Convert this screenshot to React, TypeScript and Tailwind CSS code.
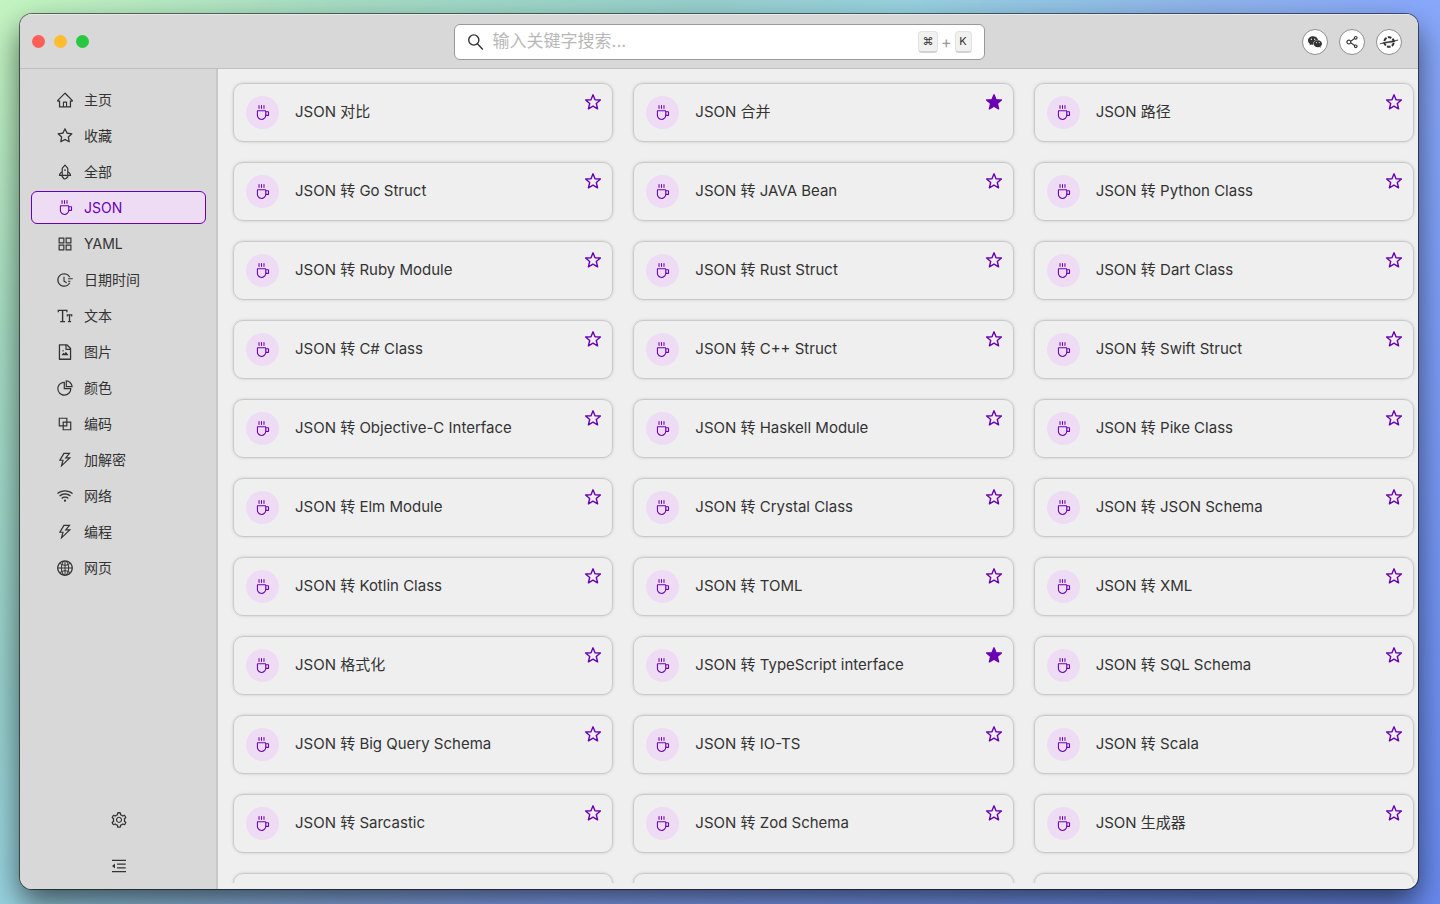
import type { IconType } from "react-icons";
import {
  AiFillWechat,
  AiOutlineAppstore,
  AiOutlineBlock,
  AiOutlineCoffee,
  AiOutlineFieldTime,
  AiOutlineFileImage,
  AiOutlineFontSize,
  AiOutlineGlobal,
  AiOutlineHome,
  AiOutlineMenuFold,
  AiOutlinePieChart,
  AiOutlineRocket,
  AiOutlineSetting,
  AiOutlineShareAlt,
  AiOutlineStar,
  AiOutlineThunderbolt,
  AiOutlineWifi,
} from "react-icons/ai";

type MenuItem = { label: string; icon: IconType };

const menu: MenuItem[] = [
  { label: "主页", icon: AiOutlineHome },
  { label: "收藏", icon: AiOutlineStar },
  { label: "全部", icon: AiOutlineRocket },
  { label: "JSON", icon: AiOutlineCoffee },
  { label: "YAML", icon: AiOutlineAppstore },
  { label: "日期时间", icon: AiOutlineFieldTime },
  { label: "文本", icon: AiOutlineFontSize },
  { label: "图片", icon: AiOutlineFileImage },
  { label: "颜色", icon: AiOutlinePieChart },
  { label: "编码", icon: AiOutlineBlock },
  { label: "加解密", icon: AiOutlineThunderbolt },
  { label: "网络", icon: AiOutlineWifi },
  { label: "编程", icon: AiOutlineThunderbolt },
  { label: "网页", icon: AiOutlineGlobal },
];

const tools = [
  "JSON 对比",
  "JSON 合并",
  "JSON 路径",
  "JSON 转 Go Struct",
  "JSON 转 JAVA Bean",
  "JSON 转 Python Class",
  "JSON 转 Ruby Module",
  "JSON 转 Rust Struct",
  "JSON 转 Dart Class",
  "JSON 转 C# Class",
  "JSON 转 C++ Struct",
  "JSON 转 Swift Struct",
  "JSON 转 Objective-C Interface",
  "JSON 转 Haskell Module",
  "JSON 转 Pike Class",
  "JSON 转 Elm Module",
  "JSON 转 Crystal Class",
  "JSON 转 JSON Schema",
  "JSON 转 Kotlin Class",
  "JSON 转 TOML",
  "JSON 转 XML",
  "JSON 格式化",
  "JSON 转 TypeScript interface",
  "JSON 转 SQL Schema",
  "JSON 转 Big Query Schema",
  "JSON 转 IO-TS",
  "JSON 转 Scala",
  "JSON 转 Sarcastic",
  "JSON 转 Zod Schema",
  "JSON 生成器",
  "",
  "",
  "",
];

const favorites = ["JSON 合并", "JSON 转 TypeScript interface"];

const SearchIcon = () => (
  <svg viewBox="0 0 18 18" className="size-[18px]" fill="none" stroke="currentColor" strokeWidth="1.4">
    <circle cx="6.8" cy="7" r="5.1" />
    <path d="M10.4 10.8 15.8 16.4" />
  </svg>
);

const OrbitIcon = () => (
  <svg viewBox="0 0 20 20" className="size-5" fill="none" stroke="currentColor">
    <circle cx="10" cy="10" r="4.8" strokeWidth="2" strokeDasharray="3.7 1.33" strokeDashoffset="-0.7" />
    <path d="M.8 11.8 7 9.9 19.2 8 13 10.3Z" fill="currentColor" strokeWidth=".5" />
  </svg>
);

const StarIcon = ({ filled }: { filled: boolean }) => (
  <svg
    viewBox="0 0 18 18"
    className="size-[18px]"
    fill={filled ? "currentColor" : "none"}
    stroke="currentColor"
    strokeWidth="1.4"
    strokeLinejoin="round"
  >
    <path d="M9 1.8 11 6.7 16.4 7 12.3 10.5 13.6 15.8 9 13.1 4.4 15.8 5.7 10.5 1.6 7 7 6.7Z" />
  </svg>
);

const RoundButton = ({ label, children }: { label: string; children: React.ReactNode }) => (
  <button
    aria-label={label}
    className="flex size-[26px] items-center justify-center rounded-full border border-[#8f8f8f] bg-white"
  >
    {children}
  </button>
);

const Header = () => (
  <header className="flex h-[55px] shrink-0 items-center justify-between border-t border-b border-t-[#e9e9e9] border-b-[#c0c0c0] bg-[#d8d8d8] px-3">
    <div className="flex flex-1 gap-[9px] pr-1">
      <button aria-label="Close" className="size-[13px] rounded-full bg-[#ff5f57]" />
      <button aria-label="Minimize" className="size-[13px] rounded-full bg-[#febc2e]" />
      <button aria-label="Zoom" className="size-[13px] rounded-full bg-[#28c840]" />
    </div>
    <label className="flex h-9 w-[531px] items-center rounded-md border border-[#999] bg-white px-3">
      <SearchIcon />
      <input
        type="search"
        aria-label="搜索"
        placeholder="输入关键字搜索..."
        className="ml-2 min-w-0 flex-1 bg-transparent text-[17px] outline-none placeholder:text-[#b8b8b8]"
      />
      <span className="flex items-center gap-[3px] text-[11px] text-[#333]">
        <kbd className="flex h-[22px] w-5 items-center justify-center rounded-sm border border-b-2 border-[#e2e2e2] border-b-[#d2d2d2] bg-[#f1f1f1] font-[Inter,'DejaVu_Sans',sans-serif]">
          ⌘
        </kbd>
        <span className="text-base text-[#999]">+</span>
        <kbd className="flex h-[22px] w-[17px] items-center justify-center rounded-sm border border-b-2 border-[#e2e2e2] border-b-[#d2d2d2] bg-[#f1f1f1] font-[Inter,sans-serif]">
          K
        </kbd>
      </span>
    </label>
    <div className="flex flex-1 justify-end gap-[11px] pr-1">
      <RoundButton label="微信">
        <AiFillWechat className="size-4" />
      </RoundButton>
      <RoundButton label="分享">
        <AiOutlineShareAlt className="size-4" />
      </RoundButton>
      <RoundButton label="官网">
        <OrbitIcon />
      </RoundButton>
    </div>
  </header>
);

const Sidebar = () => (
  <aside className="flex w-[198px] shrink-0 flex-col border-r-2 border-[#c8c8c8] bg-[#d8d8d8] py-[14px] pr-[10px] pl-[11px]">
    <nav className="flex flex-col gap-[3px]">
      {menu.map(({ label, icon: Icon }) => (
        <a
          key={label}
          href="#"
          className={
            label === "JSON"
              ? "flex h-[33px] items-center gap-[10px] rounded-md border border-[#6a00b4] bg-[#eedcf5] pl-6 text-sm text-[#6a00b4]"
              : "flex h-[33px] items-center gap-[10px] rounded-md border border-transparent pl-6 text-sm"
          }
        >
          <span className="flex w-[18px] justify-center">
            <Icon className={label === "JSON" ? "size-[15px]" : "size-[18px]"} />
          </span>
          {label}
        </a>
      ))}
    </nav>
    <div className="mt-auto flex flex-col items-center gap-7">
      <button aria-label="设置">
        <AiOutlineSetting className="size-[18px]" />
      </button>
      <button aria-label="收起菜单">
        <AiOutlineMenuFold className="size-[18px]" />
      </button>
    </div>
  </aside>
);

const ToolCard = ({ title }: { title: string }) => (
  <article className="flex h-[59px] items-start justify-between rounded-[10px] border border-[#cacaca] pr-[10px] pl-3 shadow-[0_0_3px_#c8c8c8]">
    <div className="flex h-full items-center gap-4">
      <span className="flex size-[33px] items-center justify-center rounded-full bg-[#eedcf5] text-[#6a00b4]">
        <AiOutlineCoffee className="size-[15px]" />
      </span>
      <h2 className="text-[15px]">{title}</h2>
    </div>
    <button aria-label="收藏" className="mt-[9px] text-[#6a00b4]">
      <StarIcon filled={favorites.includes(title)} />
    </button>
  </article>
);

export default function App() {
  return (
    <div className="h-screen overflow-hidden bg-[linear-gradient(135deg,#c4f5c0_0%,#a6dcc4_15%,#97d0cd_30%,#98d2e0_39%,#8eb4ec_52%,#88a8fb_61%,#6889ee_100%)] pt-[14px] pr-[22px] pb-[15px] pl-5 font-[Inter,'Noto_Sans_CJK_SC',sans-serif] text-[#333]">
      <div className="flex h-full flex-col overflow-hidden rounded-xl bg-[#efefef] shadow-[0_0_0_1px_#00000088,0_14px_30px_#00000099]">
        <Header />
        <div className="flex min-h-0 flex-1">
          <Sidebar />
          <main className="mb-[6px] min-w-0 flex-1 overflow-hidden pt-[14px] pr-1 pl-[15px]">
            <div className="grid grid-cols-3 gap-5">
              {tools.map((title, i) => (
                <ToolCard key={i} title={title} />
              ))}
            </div>
          </main>
        </div>
      </div>
    </div>
  );
}
